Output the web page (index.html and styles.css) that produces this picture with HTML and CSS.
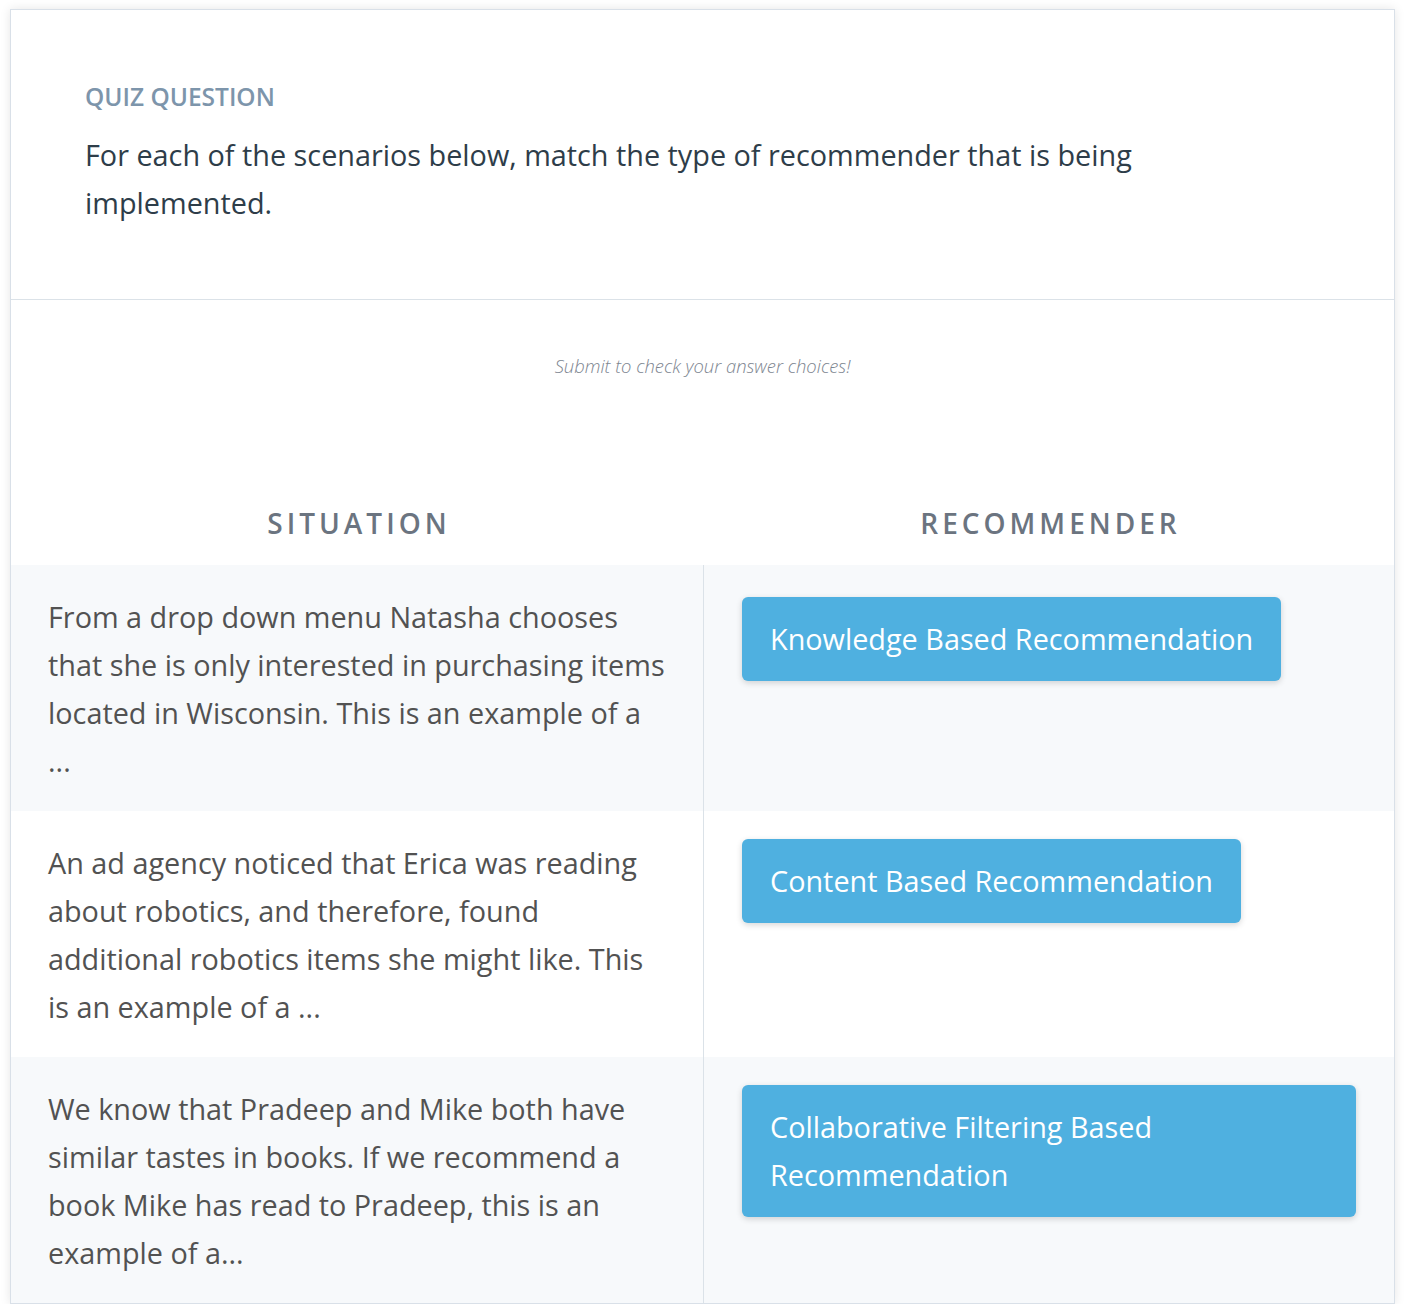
FILE: index.html
```html
<!DOCTYPE html>
<html lang="en">
<head>
<meta charset="utf-8">
<title>Quiz Question</title>
<link rel="stylesheet" href="styles.css">
</head>
<body>
<div class="card">
  <section class="question">
    <div class="label">Quiz Question</div>
    <p class="prompt">For each of the scenarios below, match the type of recommender that is being implemented.</p>
  </section>
  <section class="matching">
    <p class="hint">Submit to check your answer choices!</p>
    <div class="table">
      <div class="col-head">Situation</div>
      <div class="col-head">Recommender</div>

      <div class="cell situation shaded">From a drop down menu Natasha chooses that she is only interested in purchasing items located in Wisconsin. This is an example of a ...</div>
      <div class="cell drop shaded first"><div class="answer">Knowledge Based Recommendation</div></div>

      <div class="cell situation">An ad agency noticed that Erica was reading about robotics, and therefore, found additional robotics items she might like. This is an example of a ...</div>
      <div class="cell drop"><div class="answer">Content Based Recommendation</div></div>

      <div class="cell situation shaded">We know that Pradeep and Mike both have similar tastes in books. If we recommend a book Mike has read to Pradeep, this is an example of a...</div>
      <div class="cell drop shaded"><div class="answer">Collaborative Filtering Based Recommendation</div></div>
    </div>
  </section>
</div>
</body>
</html>
```

FILE: styles.css
```css
* { box-sizing: border-box; }
html, body { margin: 0; background: #ffffff; }
body {
  padding: 9px 0 0 10px;
  font-family: "Open Sans", "Noto Sans", sans-serif;
}
.card {
  width: 1385px;
  border: 1px solid #d9e0e8;
  background: #ffffff;
  box-shadow: 0 0 10px rgba(0, 0, 0, 0.1);
}
.question {
  padding: 71px 74px 72px;
  border-bottom: 1px solid #dbe2e8;
}
.label {
  font-size: 24.5px;
  line-height: 32px;
  font-weight: 600;
  text-transform: uppercase;
  color: #7d95ab;
  margin-bottom: 18px;
}
.prompt {
  margin: 0;
  font-size: 28.8px;
  line-height: 48px;
  color: #2e3d49;
  max-width: 1120px;
}
.hint {
  margin: 54px 0 0;
  text-align: center;
  font-size: 18.4px;
  line-height: 24px;
  font-style: italic;
  font-weight: 300;
  color: #7d8590;
}
.table {
  margin-top: 125px;
  display: grid;
  grid-template-columns: 692px 1fr;
}
.col-head {
  text-align: center;
  font-size: 28px;
  line-height: 40px;
  font-weight: 600;
  letter-spacing: 4px;
  text-transform: uppercase;
  color: #6b7480;
  padding-bottom: 22px;
  padding-left: 4px;
}
.cell { min-height: 246px; }
.shaded { background: #f7f9fb; }
.situation {
  padding: 28px 36px 26px 37px;
  font-size: 28.8px;
  line-height: 48px;
  color: #525252;
}
.drop {
  border-left: 1px solid #dbe2e8;
  padding: 28px 38px;
  display: flex;
  align-items: flex-start;
}
.drop.first { padding-top: 32px; }
.answer {
  background: #4fb0e0;
  color: #ffffff;
  border-radius: 6px;
  padding: 18px 28px;
  font-size: 28.8px;
  line-height: 48px;
  box-shadow: 0 2px 6px rgba(0, 0, 0, 0.16);
}
```
